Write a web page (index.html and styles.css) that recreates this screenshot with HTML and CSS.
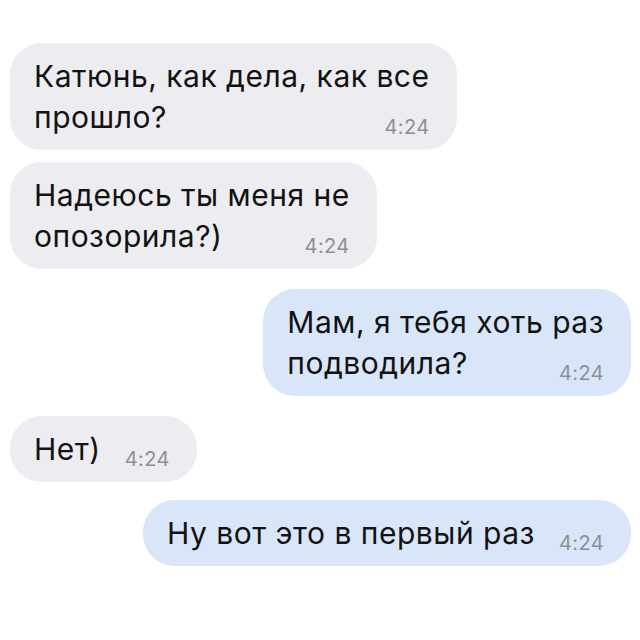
FILE: index.html
```html
<!DOCTYPE html>
<html lang="ru">
<head>
<meta charset="utf-8">
<title>Чат</title>
<link rel="stylesheet" href="styles.css">
</head>
<body>
<main class="chat">
  <div class="msg in">
    <div class="bubble">
      <div class="line">Катюнь, как дела, как все</div>
      <div class="line last"><span>прошло?</span><span class="time">4:24</span></div>
    </div>
  </div>
  <div class="msg in">
    <div class="bubble">
      <div class="line">Надеюсь ты меня не</div>
      <div class="line last"><span>опозорила?)</span><span class="time">4:24</span></div>
    </div>
  </div>
  <div class="msg out switch">
    <div class="bubble">
      <div class="line">Мам, я тебя хоть раз</div>
      <div class="line last"><span>подводила?</span><span class="time">4:24</span></div>
    </div>
  </div>
  <div class="msg in switch">
    <div class="bubble">
      <div class="line last"><span>Нет)</span><span class="time">4:24</span></div>
    </div>
  </div>
  <div class="msg out switch tight">
    <div class="bubble">
      <div class="line last"><span>Ну вот это в первый раз</span><span class="time">4:24</span></div>
    </div>
  </div>
</main>
</body>
</html>
```
FILE: styles.css
```css
html, body {
  margin: 0;
  padding: 0;
  background: #ffffff;
}
body {
  font-family: Inter, "Liberation Sans", Arial, sans-serif;
  color: #121212;
}
.chat {
  display: flex;
  flex-direction: column;
  gap: 12px;
  padding: 43px 9px 0 10px;
}
.msg {
  display: flex;
}
.msg.switch {
  margin-top: 8px;
}
.msg.switch.tight {
  margin-top: 6px;
}
.msg.in {
  justify-content: flex-start;
}
.msg.out {
  justify-content: flex-end;
}
.bubble {
  border-radius: 32px;
  padding: 13px 27px 12px 24px;
  font-size: 30px;
  letter-spacing: 0.5px;
  line-height: 41px;
}
.msg.in .bubble {
  background: #ececf1;
}
.msg.out .bubble {
  background: #d9e6f9;
}
.line.last {
  display: flex;
  align-items: baseline;
  gap: 24px;
}
.time {
  margin-left: auto;
  font-size: 20px;
  letter-spacing: 0.4px;
  line-height: 20px;
  color: #8e8e93;
  transform: translateY(6px);
}
```
